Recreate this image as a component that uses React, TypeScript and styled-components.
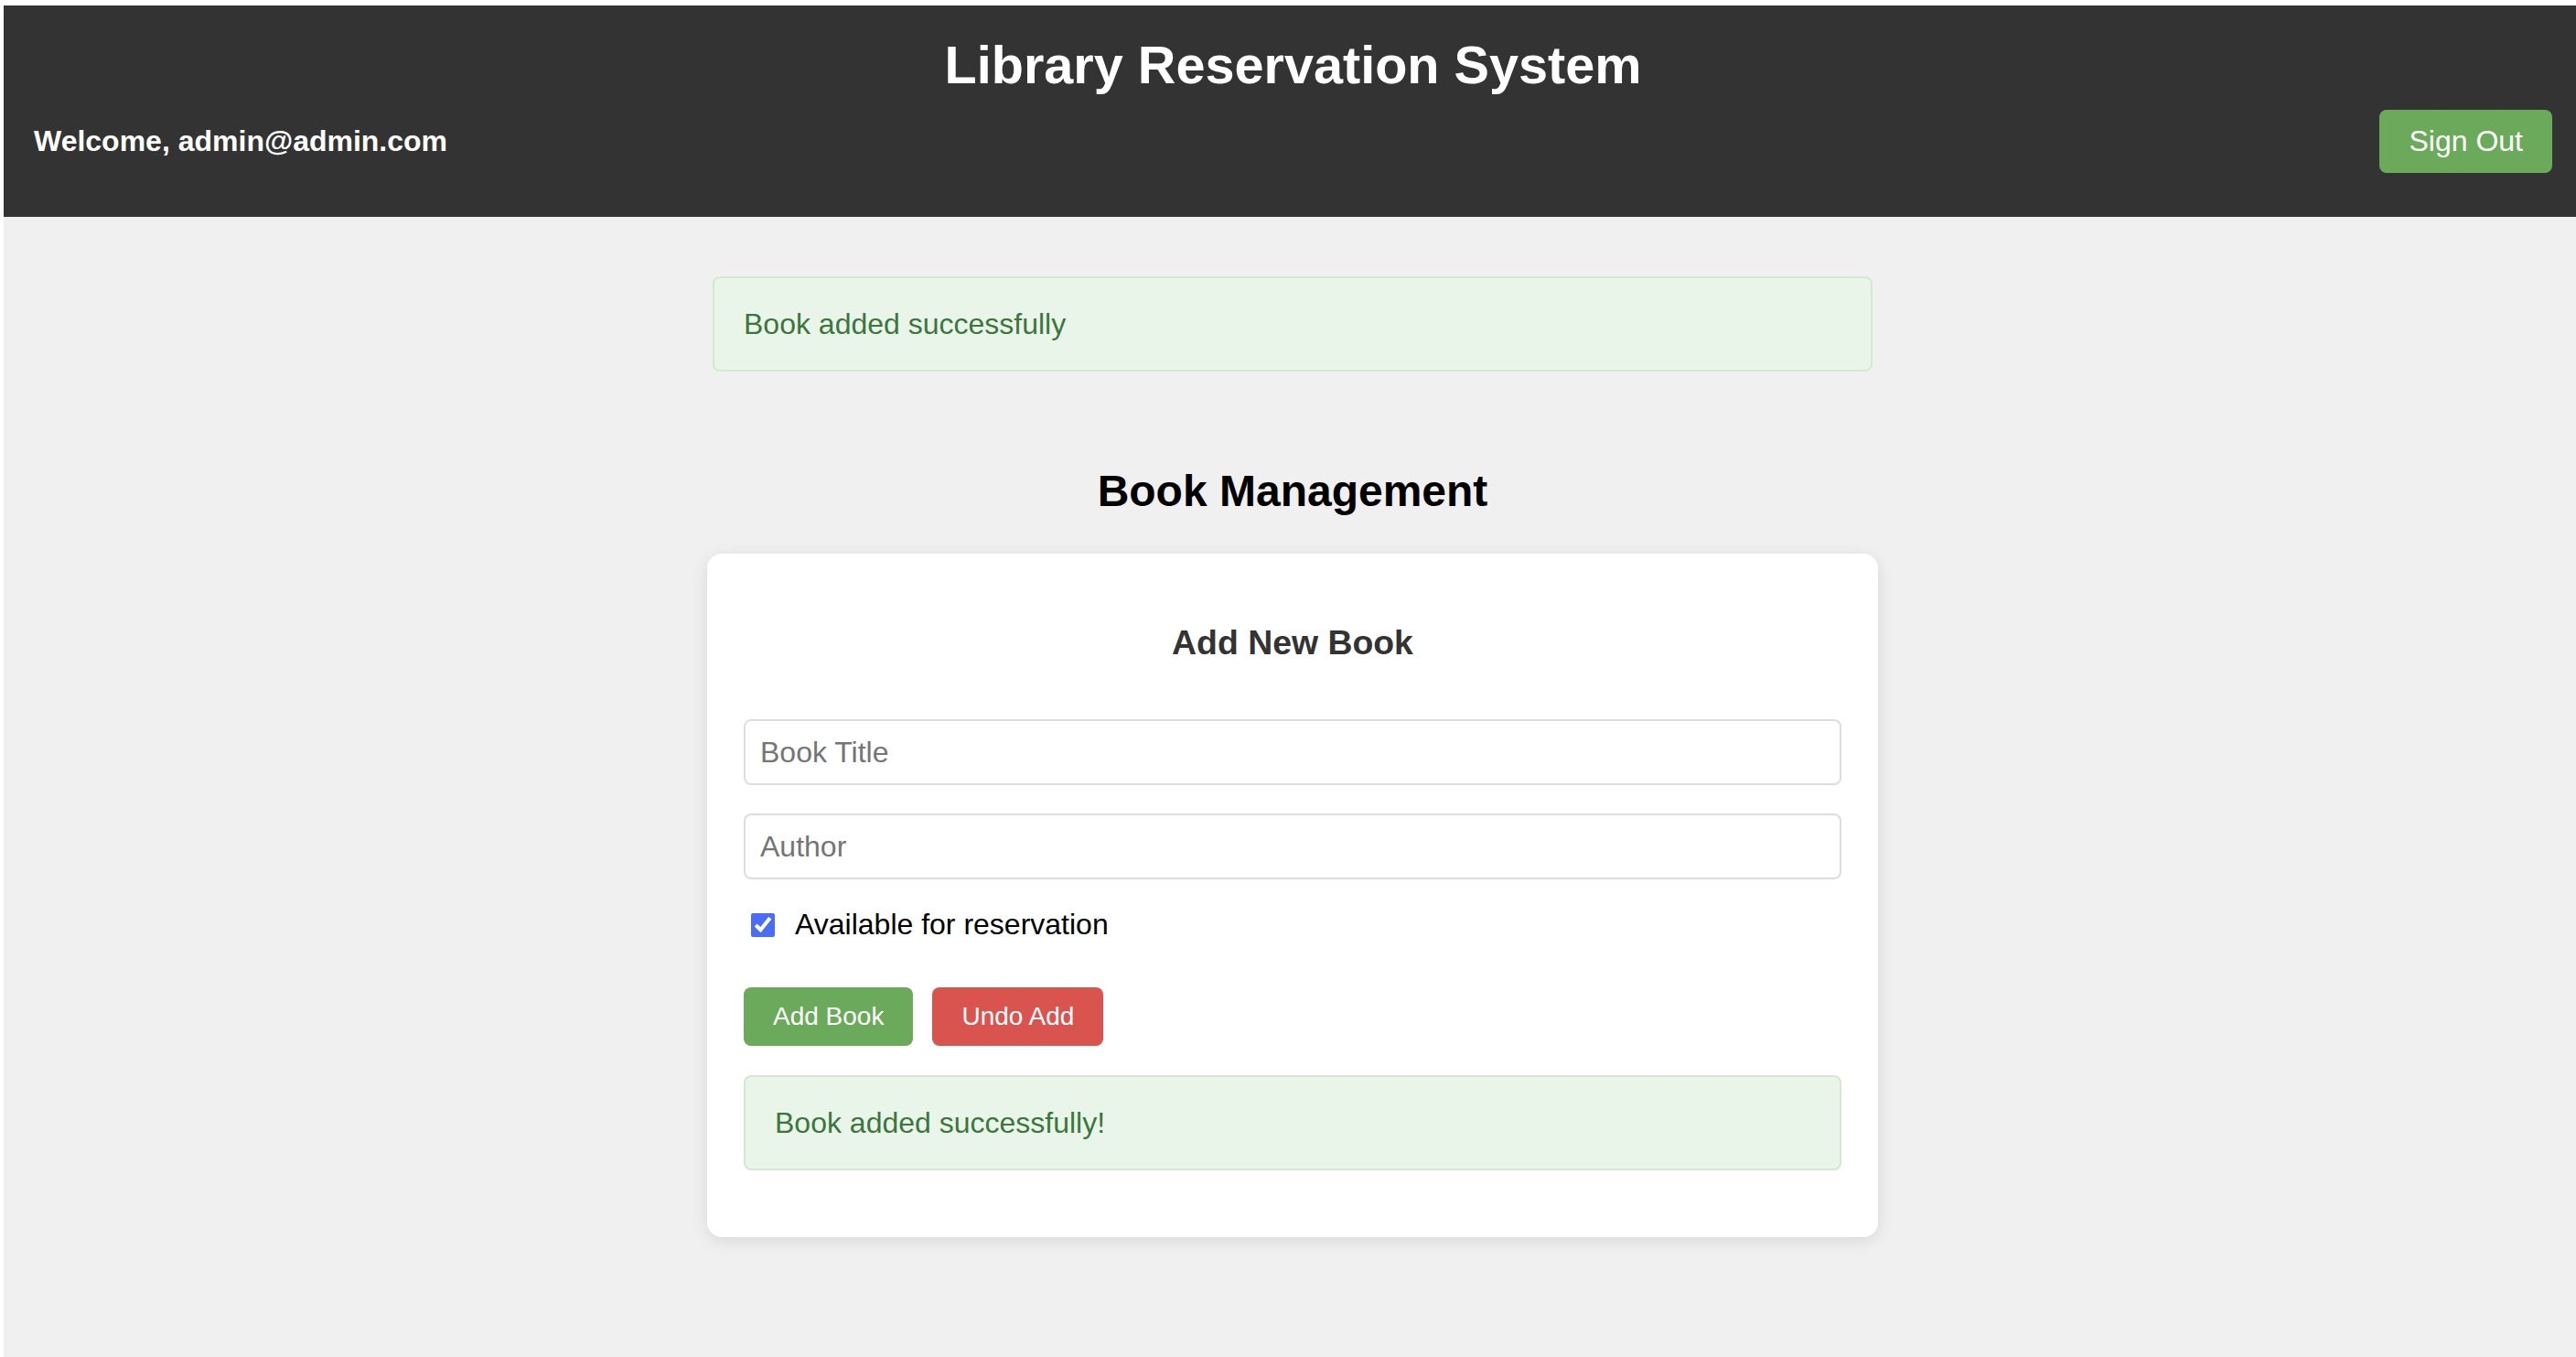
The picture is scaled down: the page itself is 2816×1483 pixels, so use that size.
import * as React from 'react';
import styled, {createGlobalStyle} from 'styled-components';

const $DARK = '#333333';
const $PAGE = '#f0f0f0';
const $GREEN = '#6aaa5a';
const $RED = '#d9534f';
const $FONT = '"Liberation Sans", Arial, Helvetica, sans-serif';

const GlobalStyle = createGlobalStyle`
  html, body {
    background: #ffffff;
  }
  body {
    margin: 6px 0 0 4px;
    font-family: ${$FONT};
  }
  * {
    box-sizing: border-box;
  }
`;

const Page = styled.div`
  min-height: calc(100vh - 6px);
  background: ${$PAGE};
  display: flex;
  flex-direction: column;
`;

const Header = styled.header`
  background: ${$DARK};
  color: #ffffff;
  padding: 32px 26px 48px 33px;
  display: flex;
  flex-direction: column;
  gap: 16px;
`;

const Title = styled.h1`
  margin: 0;
  text-align: center;
  font-size: 57.6px;
  font-weight: 700;
  line-height: 66px;
`;

const UserBar = styled.div`
  display: flex;
  align-items: center;
  justify-content: space-between;
`;

const Welcome = styled.span`
  font-size: 32px;
  font-weight: 700;
`;

const Button = styled.button<{variant?: 'green' | 'red'; big?: boolean}>`
  border: none;
  border-radius: 8px;
  color: #ffffff;
  cursor: pointer;
  font-family: ${$FONT};
  font-size: ${({big}) => big ? '32px' : '28px'};
  line-height: ${({big}) => big ? '37px' : '32px'};
  padding: 16px 32px;
  background: ${({variant}) => variant === 'red' ? $RED : $GREEN};
`;

const Main = styled.main`
  display: flex;
  flex-direction: column;
  align-items: center;
  padding: 65px 0 60px 6px;
`;

const Alert = styled.div<{wide?: boolean}>`
  width: ${({wide}) => wide ? '100%' : '1268px'};
  background: #eaf5e9;
  border: 2px solid #d4e8cf;
  border-radius: 8px;
  color: #3c763d;
  font-size: 32px;
  line-height: 36px;
  padding: 32px;
`;

const SectionTitle = styled.h2`
  margin: 103px 0 41px;
  font-size: 48px;
  line-height: 55px;
  font-weight: 700;
  color: #000000;
`;

const Card = styled.section`
  width: 1280px;
  background: #ffffff;
  border-radius: 16px;
  box-shadow: 0 4px 18px rgba(0, 0, 0, 0.1);
  padding: 40px 40px 73px;
  display: flex;
  flex-direction: column;
`;

const CardTitle = styled.h3`
  margin: 36px 0 62px;
  text-align: center;
  font-size: 37.4px;
  line-height: 43px;
  font-weight: 700;
  color: ${$DARK};
`;

const Input = styled.input`
  width: 100%;
  height: 72px;
  margin-bottom: 31px;
  padding: 0 16px;
  border: 2px solid #dddddd;
  border-radius: 8px;
  font-family: ${$FONT};
  font-size: 32px;
  color: #333333;
  &::placeholder {
    color: #757575;
  }
`;

const CheckRow = styled.label`
  display: flex;
  align-items: center;
  height: 37px;
  font-size: 32px;
  color: #000000;
`;

const Checkbox = styled.input`
  width: 26px;
  height: 26px;
  margin: 0 22px 0 8px;
  accent-color: #4a6cf7;
`;

const Actions = styled.div`
  display: flex;
  gap: 21px;
  margin: 50px 0 32px;
`;

export default function App() {
  return (
    <>
      <GlobalStyle />
      <Page>
        <Header>
          <Title>Library Reservation System</Title>
          <UserBar>
            <Welcome>Welcome, admin@admin.com</Welcome>
            <Button big>Sign Out</Button>
          </UserBar>
        </Header>
        <Main>
          <Alert>Book added successfully</Alert>
          <SectionTitle>Book Management</SectionTitle>
          <Card>
            <CardTitle>Add New Book</CardTitle>
            <Input placeholder="Book Title" />
            <Input placeholder="Author" />
            <CheckRow>
              <Checkbox type="checkbox" defaultChecked />
              Available for reservation
            </CheckRow>
            <Actions>
              <Button>Add Book</Button>
              <Button variant="red">Undo Add</Button>
            </Actions>
            <Alert wide>Book added successfully!</Alert>
          </Card>
        </Main>
      </Page>
    </>
  );
}
